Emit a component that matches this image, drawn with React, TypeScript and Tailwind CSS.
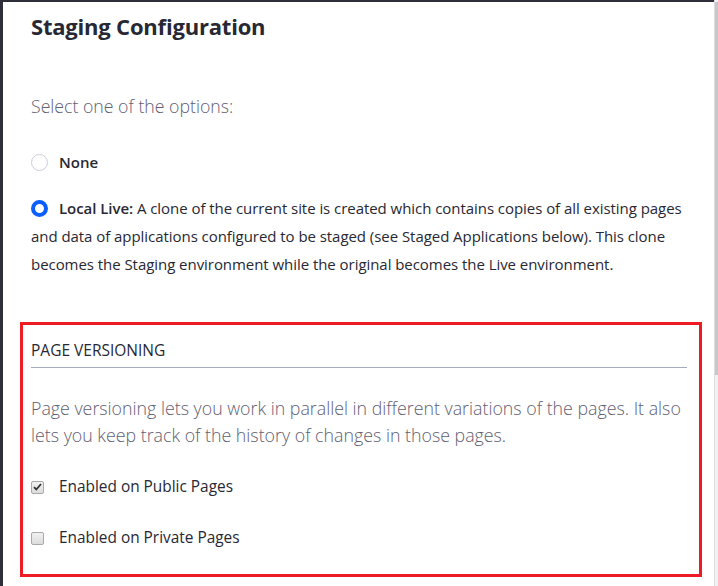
import React from 'react';

function Radio({ checked }: { checked?: boolean }) {
  return checked ? (
    <span className="box-border inline-block h-[17px] w-[17px] shrink-0 rounded-full border-[4px] border-[#0b5fff] bg-white" />
  ) : (
    <span className="box-border inline-block h-[17px] w-[17px] shrink-0 rounded-full border border-[#cdced9] bg-white" />
  );
}

function Checkbox({ checked }: { checked?: boolean }) {
  return (
    <span className="box-border flex h-[13px] w-[13px] shrink-0 items-center justify-center rounded-[2px] border border-[#a9a9a9] bg-gradient-to-b from-[#f1f1f1] to-[#dcdcdc]">
      {checked && (
        <svg width="9" height="8" viewBox="0 0 9 8">
          <path d="M1 4.2 L3.3 6.5 L8 1" fill="none" stroke="#333" strokeWidth="1.8" />
        </svg>
      )}
    </span>
  );
}

export default function App() {
  return (
    <div className="flex h-[586px] w-[718px] overflow-hidden bg-[#2f2f3b] font-['Open_Sans',sans-serif]">
      <div className="mt-[2px] ml-[3px] flex-1 bg-white px-[28px] text-[#272833]">
        <h1 className="mt-[10px] text-[22px] font-bold leading-[28px] tracking-[-0.2px]">Staging Configuration</h1>

        <p className="mt-[54px] text-[17.7px] font-light leading-[24px] text-[#5f6072]">Select one of the options:</p>

        <div className="mt-[34px] flex h-[20px] items-center gap-[11px]">
          <Radio />
          <span className="text-[15px] font-semibold">None</span>
        </div>

        <div className="mt-[22px] whitespace-nowrap text-[15px] leading-[28px] tracking-[-0.05px]">
          <div className="flex items-center gap-[11px]">
            <Radio checked />
            <span>
              <b className="font-semibold">Local Live:</b> A clone of the current site is created which contains copies of all existing pages
            </span>
          </div>
          <div>and data of applications configured to be staged (see Staged Applications below). This clone</div>
          <div>becomes the Staging environment while the original becomes the Live environment.</div>
        </div>

        <section className="mt-[44px] ml-[-11px] mr-[-16px] border-[3px] border-[#ed1c24] pl-[8px] pr-[12px] pt-[15px] pb-[26px]">
          <h2 className="border-b border-[#a7a9bc] pb-[7px] text-[15.5px] font-medium uppercase leading-[20px]">Page Versioning</h2>
          <p className="mt-[27px] text-[17.8px] font-light leading-[27px] text-[#5f6072]">
            Page versioning lets you work in parallel in different variations of the pages. It also lets you keep track of the history of changes in those pages.
          </p>
          <div className="mt-[28px] flex h-[20px] items-center gap-[15px]">
            <Checkbox checked />
            <span className="text-[15.4px] font-medium leading-[20px]">Enabled on Public Pages</span>
          </div>
          <div className="mt-[31px] flex h-[20px] items-center gap-[15px]">
            <Checkbox />
            <span className="text-[15.4px] font-medium leading-[20px]">Enabled on Private Pages</span>
          </div>
        </section>
      </div>
      <div className="flex w-[4px] flex-col border-l border-[#dcdce0] bg-[#f1f1f3]">
        <div className="mt-[2px] h-[373px] bg-[#c8c8cc]" />
      </div>
    </div>
  );
}
